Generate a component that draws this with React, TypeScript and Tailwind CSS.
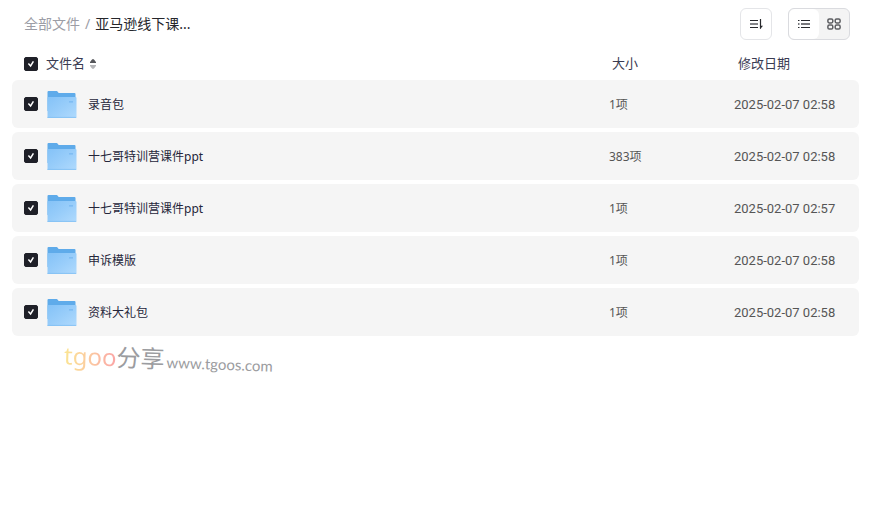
import { useState } from 'react';
import clsx from 'clsx';

type FileItem = {
  id: number;
  name: string;
  size: string;
  date: string;
};

const FILES: FileItem[] = [
  { id: 1, name: '录音包', size: '1项', date: '2025-02-07 02:58' },
  { id: 2, name: '十七哥特训营课件ppt', size: '383项', date: '2025-02-07 02:58' },
  { id: 3, name: '十七哥特训营课件ppt', size: '1项', date: '2025-02-07 02:57' },
  { id: 4, name: '申诉模版', size: '1项', date: '2025-02-07 02:58' },
  { id: 5, name: '资料大礼包', size: '1项', date: '2025-02-07 02:58' },
];

function Checkbox({ label, checked, onChange }: { label: string; checked: boolean; onChange: () => void }) {
  return (
    <span className="relative block size-3.5 shrink-0">
      <input
        type="checkbox"
        aria-label={label}
        checked={checked}
        onChange={onChange}
        className="block size-3.5 appearance-none rounded-xs border border-[#c4c5cc] bg-white checked:border-[#1f2028] checked:bg-[#1f2028]"
      />
      {checked && (
        <svg className="pointer-events-none absolute inset-0" width="14" height="14" viewBox="0 0 14 14" fill="none" stroke="#fff" strokeWidth="1.5">
          <path d="M4.4 6.6l2.2 2.4 2.8-4.6" />
        </svg>
      )}
    </span>
  );
}

function FolderIcon() {
  return (
    <svg className="shrink-0" width="30" height="30" viewBox="0 -2 30 30">
      <defs>
        <linearGradient id="folder" x1="0" y1="0" x2="1" y2="1">
          <stop offset="0" stopColor="#84c2f7" />
          <stop offset="0.5" stopColor="#98cdfa" />
          <stop offset="1" stopColor="#b0dafd" />
        </linearGradient>
      </defs>
      <path d="M.5 1a1 1 0 0 1 1-1h8.2a1 1 0 0 1 .8.4l1.2 1.6h15.8a1 1 0 0 1 1 1V20H.5z" fill="#5fabea" />
      <path d="M1.5 6h27a1 1 0 0 1 1 1v19a1 1 0 0 1-1 1h-28V7a1 1 0 0 1 1-1z" fill="url(#folder)" />
      <path d="M.5 26.4h28.7" stroke="#7fbef2" strokeWidth="0.8" />
      <path d="M22 10.8h4" stroke="#7fbdf3" strokeWidth="1.6" />
    </svg>
  );
}

export default function App() {
  const [selected, setSelected] = useState<number[]>(FILES.map((f) => f.id));
  const [view, setView] = useState<'list' | 'grid'>('list');

  const allChecked = selected.length === FILES.length;

  const toggle = (id: number) =>
    setSelected((prev) => (prev.includes(id) ? prev.filter((x) => x !== id) : [...prev, id]));

  return (
    <div className="min-h-screen bg-white pr-[15px] pl-3 font-['Noto_Sans','Noto_Sans_CJK_SC',sans-serif] text-xs text-[#25263a]">
      {/* Toolbar */}
      <header className="flex h-12 items-center justify-between pr-[9px] pl-3">
        <nav className="flex items-center gap-[5px] text-sm" aria-label="路径">
          <a href="#" className="text-[#9c9da6]">全部文件</a>
          <span className="text-[#9c9da6]">/</span>
          <span className="text-[#25262b]">亚马逊线下课...</span>
        </nav>
        <div className="flex gap-4">
          <button
            type="button"
            aria-label="排序"
            className="flex size-8 items-center justify-center rounded-md border border-[#e4e5e8] text-[#28292d]"
          >
            <svg width="16" height="16" viewBox="0 0 16 16" fill="none" stroke="currentColor" strokeWidth="1.2">
              <path d="M2 4.5h8M2 11.5h8M12.5 3v9.5" />
              <path d="M2 8h8" stroke="#77787c" strokeWidth="1.8" />
              <path d="M12 13.2l3-3.4h-3z" fill="currentColor" stroke="none" />
            </svg>
          </button>
          <div className="flex overflow-hidden rounded-md border border-[#dadbdf] bg-[#f4f4f4] text-[#28292d]">
            <button
              type="button"
              aria-label="列表"
              aria-pressed={view === 'list'}
              onClick={() => setView('list')}
              className={clsx('flex h-[30px] w-[30px] items-center justify-center rounded-md', view === 'list' && 'bg-white')}
            >
              <svg width="16" height="16" viewBox="0 0 16 16" stroke="currentColor" strokeWidth="1.2">
                <path d="M2 4.5h1.5M5 4.5h9M2 11.5h1.5M5 11.5h9" />
                <path d="M2 8h1.5M5 8h9" stroke="#77787c" strokeWidth="1.8" />
              </svg>
            </button>
            <button
              type="button"
              aria-label="网格"
              aria-pressed={view === 'grid'}
              onClick={() => setView('grid')}
              className={clsx('flex h-[30px] w-[30px] items-center justify-center rounded-md', view === 'grid' && 'bg-white')}
            >
              <svg width="16" height="16" viewBox="0 0 16 16" fill="none" stroke="#5c5d61" strokeWidth="1.5">
                <rect x="1.9" y="2.9" width="4.9" height="4" rx="1.4" />
                <rect x="9.2" y="2.9" width="4.9" height="4" rx="1.4" />
                <rect x="1.9" y="9.1" width="4.9" height="4" rx="1.4" />
                <rect x="9.2" y="9.1" width="4.9" height="4" rx="1.4" />
              </svg>
            </button>
          </div>
        </div>
      </header>

      {/* File list */}
      <table className="w-full table-fixed border-separate border-spacing-x-0 border-spacing-y-1">
        <colgroup>
          <col />
          <col className="w-[125px]" />
          <col className="w-[125px]" />
        </colgroup>
        <thead>
          <tr className="h-6 text-left text-[13px] text-[#3a3b52]">
            <th className="p-0 pl-3 font-normal">
              <div className="flex items-center gap-2">
                <Checkbox label="全选" checked={allChecked} onChange={() => setSelected(allChecked ? [] : FILES.map((f) => f.id))} />
                <button type="button" className="flex items-center gap-1">
                  文件名
                  <svg width="8" height="12" viewBox="0 0 8 12">
                    <path d="M1 5V4C2 3.6 2.6 1 4 1s2 2.6 3 3v1z" fill="#55565b" />
                    <path d="M1 7v1c1 .4 1.6 3 3 3s2-2.6 3-3V7z" fill="#b4b5b8" />
                  </svg>
                </button>
              </div>
            </th>
            <th className="p-0 pl-[3px] font-normal">大小</th>
            <th className="p-0 pl-1 font-normal">修改日期</th>
          </tr>
        </thead>
        <tbody>
          {FILES.map((file) => (
            <tr key={file.id} className="h-12 text-[#555555]">
              <td className="rounded-l-md bg-[#f5f5f5] p-0 pl-3">
                <div className="flex items-center">
                  <Checkbox label={file.name} checked={selected.includes(file.id)} onChange={() => toggle(file.id)} />
                  <div className="ml-[9px] flex items-center gap-[11px]">
                    <FolderIcon />
                    <span className="pt-0.5 text-[#25263a]">{file.name}</span>
                  </div>
                </div>
              </td>
              <td className="bg-[#f5f5f5] p-0 pt-0.5">{file.size}</td>
              <td className="rounded-r-md bg-[#f5f5f5] p-0 pt-0.5 font-['Roboto',sans-serif] text-[13px]">{file.date}</td>
            </tr>
          ))}
        </tbody>
      </table>

      {/* Site mark */}
      <div className="mt-[3px] ml-[52px] flex w-fit rotate-2 items-baseline gap-0.5 whitespace-nowrap text-[#9b9ca0]">
        <span className="text-2xl">
          <span className="bg-linear-to-r from-[#fbe592] via-[#fbc9a0] to-[#fba5a5] bg-clip-text text-transparent">tgoo</span>
          分享
        </span>
        <span className="font-['Lato',sans-serif] text-[15px]">www.tgoos.com</span>
      </div>
    </div>
  );
}
